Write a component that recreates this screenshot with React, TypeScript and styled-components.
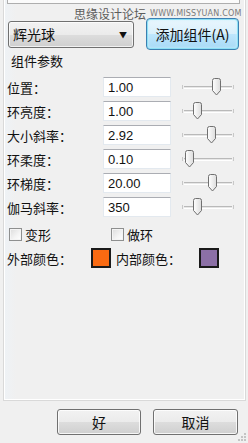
import styled, { createGlobalStyle } from 'styled-components'

const GlobalStyle = createGlobalStyle`
  html, body {
    margin: 0;
    padding: 0;
    background: #f0f0f0;
  }
  * {
    box-sizing: border-box;
  }
`

const params = [
  { label: '位置：', value: '1.00', thumb: 29 },
  { label: '环亮度：', value: '1.00', thumb: 10 },
  { label: '大小斜率：', value: '2.92', thumb: 24 },
  { label: '环柔度：', value: '0.10', thumb: 2 },
  { label: '环梯度：', value: '20.00', thumb: 25 },
  { label: '伽马斜率：', value: '350', thumb: 10 },
]

function Thumb() {
  return (
    <svg width="11" height="18" viewBox="0 0 11 18">
      <defs>
        <linearGradient id="tg" x1="0" y1="0" x2="1" y2="0">
          <stop offset="0" stopColor="#ffffff" />
          <stop offset="1" stopColor="#dcdcdc" />
        </linearGradient>
      </defs>
      <path
        d="M1.5 2.5 Q1.5 0.5 3.5 0.5 H7.5 Q9.5 0.5 9.5 2.5 V12.5 L5.5 17 L1.5 12.5 Z"
        fill="url(#tg)"
        stroke="#707070"
      />
    </svg>
  )
}

function Slider({ pos }: { pos: number }) {
  return (
    <SliderWrap>
      <Tick />
      <Track />
      <Tick />
      <ThumbHolder style={{ left: pos }}>
        <Thumb />
      </ThumbHolder>
    </SliderWrap>
  )
}

function App() {
  return (
    <>
      <GlobalStyle />
      <Window>
        <Panel>
          <TopEdge />
          <Header>
            <Dropdown>
              <span>辉光球</span>
              <Arrow>▼</Arrow>
            </Dropdown>
            <AddButton>添加组件(A)</AddButton>
          </Header>
          <GroupTitle>组件参数</GroupTitle>
          <Rows>
            {params.map((p) => (
              <Row key={p.label}>
                <Label>{p.label}</Label>
                <Input>{p.value}</Input>
                <Slider pos={p.thumb} />
              </Row>
            ))}
          </Rows>
          <CheckRow>
            <CheckItem width={102}>
              <Box />
              <span>变形</span>
            </CheckItem>
            <CheckItem>
              <Box />
              <span>做环</span>
            </CheckItem>
          </CheckRow>
          <ColorRow>
            <ColorLabel width={84}>外部颜色：</ColorLabel>
            <Swatch color="#f96a12" />
            <ColorLabel width={83} gap={5}>内部颜色：</ColorLabel>
            <Swatch color="#8c70a6" />
          </ColorRow>
        </Panel>
        <Footer>
          <DialogButton width={84}>好</DialogButton>
          <DialogButton width={85}>取消</DialogButton>
        </Footer>
        <Watermark>
          <span>思缘设计论坛</span>
          <Site>WWW.MISSYUAN.COM</Site>
        </Watermark>
        <Grip>
          <svg width="10" height="10" viewBox="0 0 10 10">
            {[
              [7, 1],
              [7, 4],
              [4, 4],
              [7, 7],
              [4, 7],
              [1, 7],
            ].map(([x, y]) => (
              <rect key={`${x}-${y}`} x={x} y={y} width="2" height="2" fill="#c4c4c4" />
            ))}
          </svg>
        </Grip>
      </Window>
    </>
  )
}

const Window = styled.div`
  position: relative;
  width: 248px;
  height: 443px;
  overflow: hidden;
  display: flex;
  flex-direction: column;
  background: #f0f0f0;
  color: #111;
  font-family: 'Noto Sans CJK SC', 'Liberation Sans', sans-serif;
  font-size: 13px;
`

const Panel = styled.div`
  height: 401px;
  margin: 0 2px 0 3px;
  border-left: 1px solid #d9d9d9;
  border-right: 1px solid #d9d9d9;
  border-bottom: 1px solid #d9d9d9;
  box-shadow: inset 1px 0 0 #ffffff, inset -1px 0 0 #ffffff, inset 0 -1px 0 #ffffff;
  background: linear-gradient(90deg, #eef2f6 0px, #f0f0f0 12px);
  display: flex;
  flex-direction: column;
`

const TopEdge = styled.div`
  height: 4px;
  margin: 0 5px 0 3px;
  background: #fbfbfb;
  border: 1px solid #aeaeae;
  border-top: none;
`

const Header = styled.div`
  display: flex;
  align-items: center;
  gap: 12px;
  height: 32px;
  margin-top: 14px;
  padding-left: 4px;
`

const Dropdown = styled.div`
  width: 126px;
  height: 27px;
  display: flex;
  align-items: center;
  justify-content: space-between;
  padding: 0 6px 0 4px;
  border: 1px solid #707070;
  border-radius: 3px;
  background: linear-gradient(#f2f2f2 0%, #ebebeb 50%, #dddddd 51%, #cfcfcf 100%);
  box-shadow: inset 0 0 0 1px rgba(255, 255, 255, 0.7);
  font-size: 14px;
`

const Arrow = styled.span`
  font-size: 8px;
  color: #111;
`

const AddButton = styled.div`
  width: 93px;
  height: 32px;
  display: flex;
  align-items: center;
  justify-content: center;
  border: 1px solid #3c7fb1;
  border-radius: 4px;
  background: linear-gradient(#eaf6fd 0%, #d9f0fc 50%, #bee6fd 51%, #a7d9f5 100%);
  box-shadow: inset 0 0 0 1px #8de0f5, inset 0 0 3px 1px #c9f1fc;
  font-size: 14px;
`

const GroupTitle = styled.div`
  height: 16px;
  line-height: 16px;
  margin-top: 3px;
  padding-left: 7px;
`

const Rows = styled.div`
  display: flex;
  flex-direction: column;
  margin-top: 6px;
  padding-left: 3px;
`

const Row = styled.div`
  display: flex;
  align-items: center;
  height: 24px;
`

const Label = styled.div`
  width: 96px;
`

const Input = styled.div`
  width: 68px;
  height: 20px;
  display: flex;
  align-items: center;
  padding-left: 4px;
  background: #ffffff;
  border: 1px solid #e3e9ef;
  border-top-color: #abadb3;
  font-family: 'Liberation Sans', sans-serif;
  font-size: 13px;
`

const SliderWrap = styled.div`
  position: relative;
  width: 52px;
  height: 20px;
  margin-left: 11px;
  display: flex;
  align-items: center;
  gap: 1px;
`

const Track = styled.div`
  flex: 1;
  height: 3px;
  border-top: 1px solid #b9b9b9;
  border-bottom: 1px solid #ffffff;
  background: #e7e7e7;
`

const Tick = styled.div`
  width: 1px;
  height: 4px;
  background: #c8c8c8;
`

const ThumbHolder = styled.div`
  position: absolute;
  top: 1px;
  line-height: 0;
`

const CheckRow = styled.div`
  display: flex;
  align-items: center;
  height: 16px;
  margin-top: 7px;
  padding-left: 5px;
`

const CheckItem = styled.div<{ width?: number }>`
  display: flex;
  align-items: center;
  gap: 3px;
  width: ${({ width }) => (width ? `${width}px` : 'auto')};
`

const Box = styled.div`
  width: 13px;
  height: 13px;
  border: 1px solid #8e8f8f;
  background: linear-gradient(135deg, #dcdcdc 0%, #f4f4f4 60%, #ffffff 100%);
  box-shadow: inset 0 0 0 1px #f4f4f4;
`

const ColorRow = styled.div`
  display: flex;
  align-items: center;
  height: 20px;
  margin-top: 6px;
  padding-left: 3px;
`

const ColorLabel = styled.div<{ width: number; gap?: number }>`
  width: ${({ width }) => width}px;
  margin-left: ${({ gap }) => gap ?? 0}px;
`

const Swatch = styled.div<{ color: string }>`
  width: 20px;
  height: 20px;
  border: 2px solid #1a1a1a;
  background: ${({ color }) => color};
`

const Footer = styled.div`
  display: flex;
  justify-content: flex-end;
  gap: 12px;
  padding: 8px 10px 0 0;
`

const DialogButton = styled.div<{ width: number }>`
  width: ${({ width }) => width}px;
  height: 26px;
  display: flex;
  align-items: center;
  justify-content: center;
  border: 1px solid #707070;
  border-radius: 3px;
  background: linear-gradient(#f2f2f2 0%, #ebebeb 50%, #dddddd 51%, #cfcfcf 100%);
  box-shadow: inset 0 0 0 1px rgba(255, 255, 255, 0.8);
  font-size: 14px;
`

const Watermark = styled.div`
  position: absolute;
  top: 7px;
  left: 74px;
  display: flex;
  align-items: center;
  gap: 4px;
  color: #5c5c5c;
  font-size: 12px;
  line-height: 14px;
`

const Site = styled.span`
  font-family: 'DejaVu Sans', sans-serif;
  font-size: 8px;
  letter-spacing: 0.2px;
  color: #7a7a7a;
`

const Grip = styled.div`
  position: absolute;
  right: 1px;
  bottom: 1px;
  line-height: 0;
`

export default App
